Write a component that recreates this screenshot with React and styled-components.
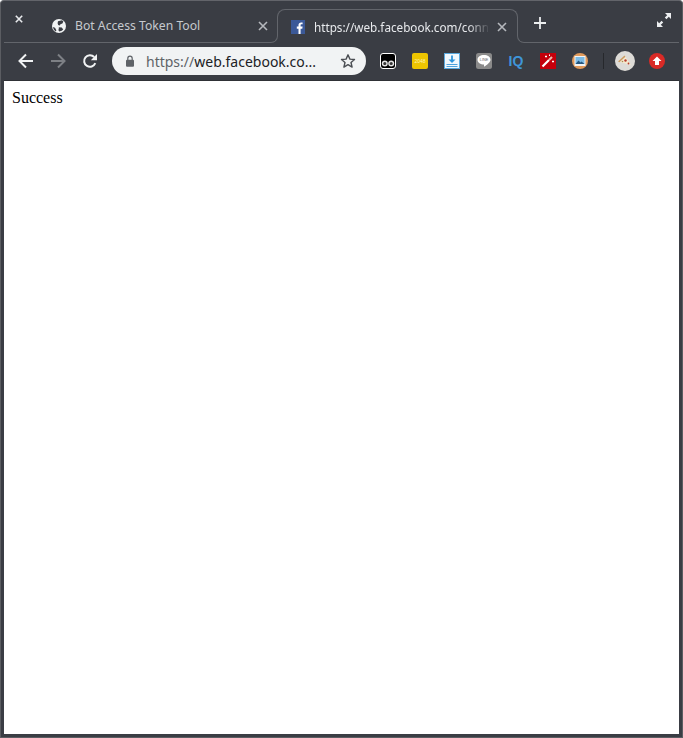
import styled, { createGlobalStyle } from 'styled-components';

const frame = '#3a3d44';
const hairline = '#62656b';

const GlobalStyle = createGlobalStyle`
  html, body, #root {
    margin: 0;
    height: 100%;
    background: #fff;
  }
`;

const Win = styled.div`
  height: 738px;
  box-sizing: border-box;
  display: flex;
  flex-direction: column;
  background: ${frame};
  border: 1px solid #5b5d62;
  border-top-color: #62646a;
  border-radius: 4px 4px 0 0;
  padding: 0 3px 3px;
  font-family: 'Noto Sans', 'Open Sans', sans-serif;
`;

const TabStrip = styled.div`
  display: flex;
  height: 42px;
  flex: none;
`;

const StripSide = styled.div`
  display: flex;
  align-items: center;
  height: 41px;
  border-bottom: 1px solid ${hairline};
`;

const LeftSide = styled(StripSide)`
  width: 266px;
  margin-right: 7px;
  flex: none;
`;

const RightSide = styled(StripSide)`
  flex: 1;
  margin-left: 7px;
  padding: 0 8px 0 9px;
`;

const WindowClose = styled.div`
  width: 30px;
  flex: none;
  display: flex;
  justify-content: center;
  margin-top: -6px;
  color: #e8eaed;
`;

const InactiveTab = styled.div`
  flex: 1;
  min-width: 0;
  display: flex;
  align-items: center;
  padding: 8px 2px 0 18px;
`;

const ActiveTab = styled.div`
  position: relative;
  flex: none;
  box-sizing: border-box;
  width: 241px;
  height: 27px;
  margin-top: 8px;
  padding: 7px 10px 0 13px;
  display: flex;
  align-items: center;
  border: 1px solid ${hairline};
  border-bottom: none;
  border-radius: 8px 8px 0 0;

  &::before, &::after {
    content: '';
    position: absolute;
    top: 26px;
    width: 7px;
    height: 6px;
    border-bottom: 1px solid ${hairline};
  }
  &::before {
    left: -8px;
    border-right: 1px solid ${hairline};
    border-bottom-right-radius: 7px;
  }
  &::after {
    right: -8px;
    border-left: 1px solid ${hairline};
    border-bottom-left-radius: 7px;
  }
`;

const TabTitle = styled.div`
  flex: 1;
  min-width: 0;
  margin-left: 9px;
  font-size: ${p => (p.$active ? '11.7px' : '12.2px')};
  line-height: 16px;
  white-space: nowrap;
  overflow: hidden;
  color: ${p => (p.$active ? '#e8eaed' : '#c6c9ce')};
  mask-image: ${p => (p.$active ? 'linear-gradient(to right, #000 calc(100% - 24px), transparent calc(100% - 2px))' : 'none')};
`;

const TabClose = styled.div`
  flex: none;
  width: 10px;
  height: 10px;
  margin-left: 5px;
  display: flex;
  color: #b5b8bd;
`;

const NewTab = styled.div`
  display: flex;
  color: #eceef0;
  margin-top: 3px;
`;

const Expand = styled.div`
  display: flex;
  margin-left: auto;
  margin-top: -4px;
  color: #eceef0;
`;

const Toolbar = styled.div`
  flex: none;
  height: 38px;
  box-sizing: border-box;
  display: flex;
  align-items: center;
  padding: 0 0 2px 6px;
  box-shadow: inset 0 -1px 0 #2f3136;
`;

const NavButton = styled.div`
  width: 32px;
  height: 32px;
  display: flex;
  align-items: center;
  justify-content: center;
  color: ${p => (p.$disabled ? '#7d8085' : '#f1f3f4')};
`;

const Omnibox = styled.div`
  flex: none;
  width: 254px;
  height: 28px;
  box-sizing: border-box;
  margin-left: 6px;
  padding: 0 10px 0 13px;
  display: flex;
  align-items: center;
  border-radius: 14px;
  background: #f1f3f4;
  color: #5f6368;
`;

const Url = styled.div`
  flex: 1;
  margin-left: 11px;
  font-size: 14px;
  color: #5f6368;
  white-space: nowrap;

  b {
    font-weight: 400;
    color: #202124;
  }
`;

const Extensions = styled.div`
  display: flex;
  align-items: center;
  margin-left: 6px;
`;

const Slot = styled.div`
  width: 32px;
  height: 32px;
  display: flex;
  align-items: center;
  justify-content: center;
`;

const Separator = styled.div`
  width: 1px;
  height: 16px;
  margin: 0 5px 0 7px;
  background: #26282c;
`;

const Page = styled.main`
  flex: 1;
  background: #fff;
  padding: 8px;
  font-family: 'Liberation Serif', serif;
  font-size: 16px;
  line-height: 18px;
  color: #000;
`;

const CloseIcon = ({ size = 10, weight = 1.6 }) => (
  <svg width={size} height={size} viewBox="0 0 10 10">
    <path d="M1 1l8 8M9 1l-8 8" stroke="currentColor" strokeWidth={weight} fill="none" />
  </svg>
);

const Globe = () => (
  <svg width="14" height="14" viewBox="0 0 14 14" style={{ flex: 'none' }}>
    <circle cx="7" cy="7" r="7" fill="#f1f3f4" />
    <path d="M6 2.200l4-1 1.400 1.400-1 2-2 .6-.6 1.400-1.600-.6-.6-1.800zM6.800 8.200l3 .4 1.400 1.800-1.400 1.400-2.400.8-1-1.400.4-1.600zM1 8l2 .8 1.400 2.400-.6 1.200C2 11.400 1.200 9.800 1 8z" fill={frame} />
  </svg>
);

const FacebookIcon = () => (
  <svg width="14" height="14" viewBox="0 0 14 14" style={{ flex: 'none' }}>
    <rect width="14" height="14" fill="#3b5998" />
    <path d="M9.600 14V8.700h1.700l.3-2.100h-2V5.300c0-.6.2-1 1-1h1V2.500c-.2 0-.8-.1-1.500-.1-1.500 0-2.600.9-2.600 2.600v1.600H5.800v2.100h1.700V14z" fill="#fff" />
  </svg>
);

const PlusIcon = () => (
  <svg width="12" height="12" viewBox="0 0 12 12">
    <path d="M6 0v12M0 6h12" stroke="currentColor" strokeWidth="1.8" />
  </svg>
);

const ExpandIcon = () => (
  <svg width="14" height="14" viewBox="0 0 14 14" fill="currentColor">
    <path d="M8 0h6v6l-2.200-2.200-2.400 2.400-1.600-1.600 2.400-2.400zM0 14V8l2.200 2.200 2.400-2.400 1.600 1.600-2.400 2.400L6 14z" />
  </svg>
);

const ArrowLeft = () => (
  <svg width="16" height="16" viewBox="0 0 16 16">
    <path d="M15 8H2M8 1.500L1.500 8 8 14.500" stroke="currentColor" strokeWidth="2" fill="none" />
  </svg>
);

const ArrowRight = () => (
  <svg width="16" height="16" viewBox="0 0 16 16">
    <path d="M1 8h13M8 1.500L14.500 8 8 14.500" stroke="currentColor" strokeWidth="2" fill="none" />
  </svg>
);

const Reload = () => (
  <svg width="16" height="16" viewBox="0 0 16 16">
    <path d="M13.300 10.200A5.800 5.800 0 1 1 12.200 4" stroke="currentColor" strokeWidth="2" fill="none" />
    <path d="M15 1v6.200H8.800z" fill="currentColor" />
  </svg>
);

const LockIcon = () => (
  <svg width="10" height="12" viewBox="0 0 10 12" style={{ flex: 'none' }}>
    <path d="M2.800 5V3.400a2.200 2.200 0 0 1 4.400 0V5" stroke="currentColor" strokeWidth="1.200" fill="none" />
    <rect x="1" y="4.800" width="8" height="7" rx="1" fill="currentColor" />
  </svg>
);

const StarIcon = () => (
  <svg width="16" height="16" viewBox="0 0 16 16" style={{ flex: 'none' }}>
    <path d="M8 1.800l1.900 4.300 4.600.4-3.500 3 1.100 4.600L8 11.700l-4.100 2.400L5 9.500l-3.500-3 4.600-.4z" stroke="#4b4e53" strokeWidth="1.400" fill="none" strokeLinejoin="round" />
  </svg>
);

const TamperIcon = () => (
  <svg width="16" height="16" viewBox="0 0 16 16">
    <rect x=".5" y=".5" width="15" height="15" rx="2.500" fill="#000" stroke="#fff" />
    <circle cx="4.800" cy="10.500" r="2.300" fill="#333" stroke="#e4e4e4" strokeWidth="1.400" />
    <circle cx="11.200" cy="10.500" r="2.300" fill="#333" stroke="#e4e4e4" strokeWidth="1.400" />
  </svg>
);

const GameIcon = () => (
  <svg width="16" height="16" viewBox="0 0 16 16">
    <rect width="16" height="16" rx="2" fill="#edc500" />
    <text x="8" y="9.800" textAnchor="middle" fontSize="5" fontFamily="Liberation Sans, sans-serif" fill="#fdf3b0">2048</text>
  </svg>
);

const DownloadIcon = () => (
  <svg width="16" height="16" viewBox="0 0 16 16">
    <rect x=".5" y=".5" width="15" height="15" fill="#f1f8fd" stroke="#5aa9de" />
    <path d="M8 2.500v5" stroke="#2f95dc" strokeWidth="1.800" />
    <path d="M4.500 6.400h7L8 10z" fill="#2f95dc" />
    <path d="M2.500 11.500h11M2.500 13.500h11" stroke="#4ea3dd" />
  </svg>
);

const LineIcon = () => (
  <svg width="16" height="16" viewBox="0 0 16 16">
    <rect width="16" height="16" rx="2.500" fill="#8a8a8a" />
    <path d="M8 2c3.600 0 6.500 2 6.500 4.800 0 2.400-3.200 5-5.900 6.600-.5.300-.7-.1-.6-.6l.1-1.200C4.500 11.500 1.500 9.500 1.500 6.800 1.500 4 4.400 2 8 2z" fill="#fff" />
    <text x="8" y="8.300" textAnchor="middle" fontSize="3.800" fontFamily="Liberation Sans, sans-serif" fill="#666">LINE</text>
  </svg>
);

const IqIcon = () => (
  <svg width="18" height="16" viewBox="0 0 18 16">
    <text x="9" y="13" textAnchor="middle" fontSize="14" fontWeight="700" fontFamily="Liberation Sans, sans-serif" fill="#3f95d8">IQ</text>
  </svg>
);

const WandIcon = () => (
  <svg width="16" height="16" viewBox="0 0 16 16">
    <rect width="16" height="16" fill="#c4000b" />
    <path d="M2.500 13.500l6.500-6.500" stroke="#fff" strokeWidth="2.200" />
    <path d="M9 7l3-3" stroke="#f0b8ac" strokeWidth="2.200" />
    <path d="M5 3.500h2M6 2.500v2M12 8.500h2M13 7.500v2M9.500 1.500v1.500" stroke="#fff" />
  </svg>
);

const PictureIcon = () => (
  <svg width="16" height="16" viewBox="0 0 16 16">
    <circle cx="8" cy="8" r="8" fill="#e09a5b" />
    <rect x="2.500" y="3" width="11" height="10" fill="#f2f5f7" />
    <rect x="3.500" y="4" width="9" height="7" fill="#7dbbe4" />
    <path d="M3.500 11l3-3.500 2 2 1-1 3 2.500z" fill="#23557e" />
  </svg>
);

const PizzaIcon = () => (
  <svg width="20" height="20" viewBox="0 0 20 20">
    <circle cx="10" cy="10" r="10" fill="#dddbd7" />
    <path d="M3 10.500L9.500 4.500 16 14z" fill="#f5e9cd" />
    <path d="M3 10.500L9.500 4.500l.9 1.300-6 5.500z" fill="#c89a63" />
    <circle cx="10.500" cy="9.500" r="1.200" fill="#b73a2e" />
    <circle cx="13.500" cy="12.500" r=".9" fill="#b73a2e" />
    <circle cx="7.500" cy="10.500" r=".8" fill="#a98a55" />
  </svg>
);

const UploadIcon = () => (
  <svg width="16" height="16" viewBox="0 0 16 16">
    <circle cx="8" cy="8" r="8" fill="#d92a26" />
    <path d="M8 3.500l4.500 4.500H10v4H6V8H3.500z" fill="#fff" />
  </svg>
);

export default function App() {
  return (
    <>
      <GlobalStyle />
      <Win>
        <TabStrip>
          <LeftSide>
            <WindowClose><CloseIcon size={8} weight={2} /></WindowClose>
            <InactiveTab>
              <Globe />
              <TabTitle>Bot Access Token Tool</TabTitle>
              <TabClose><CloseIcon /></TabClose>
            </InactiveTab>
          </LeftSide>
          <ActiveTab>
            <FacebookIcon />
            <TabTitle $active>https://web.facebook.com/connect/login_success.html</TabTitle>
            <TabClose><CloseIcon /></TabClose>
          </ActiveTab>
          <RightSide>
            <NewTab><PlusIcon /></NewTab>
            <Expand><ExpandIcon /></Expand>
          </RightSide>
        </TabStrip>
        <Toolbar>
          <NavButton><ArrowLeft /></NavButton>
          <NavButton $disabled><ArrowRight /></NavButton>
          <NavButton><Reload /></NavButton>
          <Omnibox>
            <LockIcon />
            <Url>https://<b>web.facebook.co...</b></Url>
            <StarIcon />
          </Omnibox>
          <Extensions>
            <Slot><TamperIcon /></Slot>
            <Slot><GameIcon /></Slot>
            <Slot><DownloadIcon /></Slot>
            <Slot><LineIcon /></Slot>
            <Slot><IqIcon /></Slot>
            <Slot><WandIcon /></Slot>
            <Slot><PictureIcon /></Slot>
            <Separator />
            <Slot><PizzaIcon /></Slot>
            <Slot><UploadIcon /></Slot>
          </Extensions>
        </Toolbar>
        <Page>Success</Page>
      </Win>
    </>
  );
}
